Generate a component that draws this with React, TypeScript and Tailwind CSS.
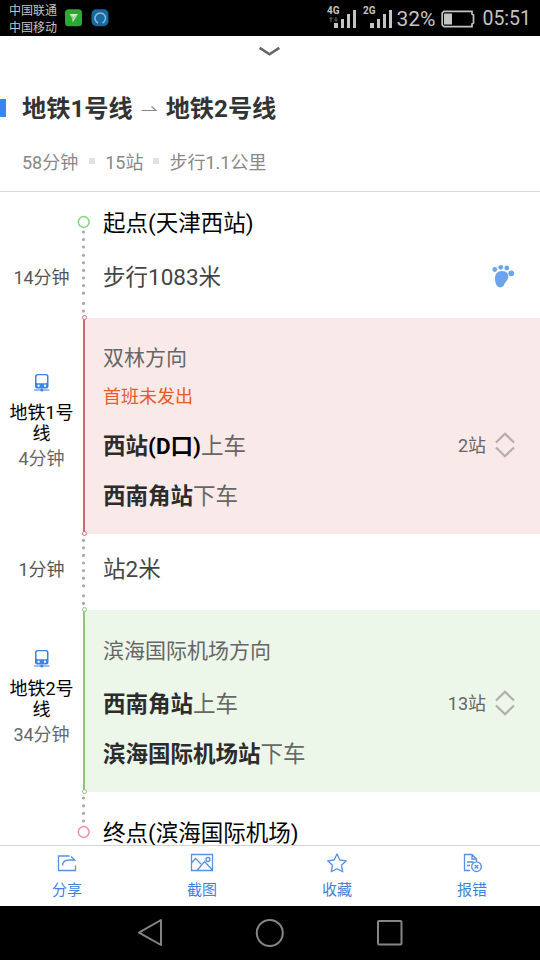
import type { ReactNode } from "react";

const DOTS_START = [232, 239.5, 247, 255.3, 262.8, 270.4, 278, 285.6, 293.2, 303.4, 311].map((y) => y - 192);
const DOTS_TRANSFER = [540.3, 547.8, 555.4, 563, 570.6, 578.2, 585.8, 595.8, 603.4].map((y) => y - 534);
const DOTS_END = [798, 805.8, 813.4, 821].map((y) => y - 792);

function DottedRail({ dots, end, endColor = "" }: { dots: number[]; end?: number; endColor?: string }) {
  return (
    <div className="relative w-[2px] shrink-0">
      <svg className="absolute -left-[7px] top-0 overflow-visible" width="16" height="50" viewBox="0 0 16 50">
        {dots.map((y) => (
          <circle key={y} cx="7.5" cy={y} r="1.6" fill="#aaaaaa" />
        ))}
        {end !== undefined && <circle cx="7.7" cy={end} r="5.4" fill="#fff" stroke={endColor} strokeWidth="1.5" />}
      </svg>
    </div>
  );
}

function LineRail({ line, dot }: { line: string; dot: string }) {
  return (
    <div className={`relative z-10 w-[2px] shrink-0 ${line}`}>
      <span className={`absolute -left-[1.5px] -top-[3px] size-[5px] rounded-full border bg-white ${dot}`} />
      <span className={`absolute -bottom-[2px] -left-[1.5px] size-[5px] rounded-full border bg-white ${dot}`} />
    </div>
  );
}

function TrainIcon() {
  return (
    <svg width="16" height="18" viewBox="0 0 16 18" fill="none">
      <path fillRule="evenodd" fill="#3d82e8" d="M3.500 0h8.500q2.500 0 2.500 2.500v10q0 2-2 2h-9.500q-2 0-2-2V2.500Q1 0 3.500 0zM4 1.300Q2.500 1.300 2.500 2.800V8q0 1.300 1.300 1.300h8q1.200 0 1.200-1.300V2.800q0-1.500-1.300-1.500zM4.600 10.500a1.200 1.200 0 1 0 .01 0zM11 10.500a1.200 1.200 0 1 0 .01 0z" />
      <path d="M0 16h15.500" stroke="#5a93e8" strokeWidth="1.200" />
      <circle cx="7.800" cy="16" r="1.500" fill="#3d82e8" />
    </svg>
  );
}

function LineLabel({ name, time }: { name: string; time: string }) {
  return (
    <>
      <TrainIcon />
      <div className="mt-[10px] w-[66px] text-center text-[18px] leading-[21px] text-black">{name}</div>
      <div className="mt-[4px] text-[18px] leading-[21px] text-[#666]">{time}</div>
    </>
  );
}

function Stops({ count }: { count: string }) {
  return (
    <div className="flex items-center gap-[9px] pr-[25px]">
      <span className="text-[18px] text-[#666]">{count}</span>
      <svg className="mb-[3px]" width="20" height="26" viewBox="0 0 20 26" fill="none" stroke="#b3adad" strokeWidth="2.200">
        <path d="M1 10.500l9-8.700 9 8.700M1 15.500l9 8.700 9-8.700" />
      </svg>
    </div>
  );
}

function Action({ label, children }: { label: string; children: ReactNode }) {
  return (
    <div className="flex w-[135px] flex-col items-center pr-[1px] pt-[6px] text-[15px] leading-[20px] text-[#3d82e0]">
      <svg width="24" height="22" viewBox="0 0 24 22" fill="none" stroke="#5791e3" strokeWidth="1.300">
        {children}
      </svg>
      <span className="mt-[6px]">{label}</span>
    </div>
  );
}

function Signal({ kind, arrows }: { kind: string; arrows?: boolean }) {
  return (
    <svg className="mb-[4px]" width="30" height="28" viewBox="0 -4 30 28" fill="#c4c4c4">
      <text x="0" y="7" fontSize="10" fontWeight="700">{kind}</text>
      {arrows && <path fill="#555" d="M2 12l2-2.500L6 12H4.600v3H3.400v-3zM7 12.500h1.400V10h1.200v2.500H11L9 15z" />}
      <path d="M7 16h4v5H7zM14 12h3v9h-3zM20 7h3v14h-3zM26 3h3v18h-3z" />
    </svg>
  );
}

export default function App() {
  return (
    <div className="flex h-[960px] w-[540px] flex-col overflow-hidden bg-white font-[Roboto,'Noto_Sans_CJK_SC',sans-serif]">
      <div className="flex h-[36px] shrink-0 items-center bg-black text-[#c4c4c4]">
        <div className="ml-[9px] mt-[3px] text-[12px] leading-[17px]">
          <div>中国联通</div>
          <div>中国移动</div>
        </div>
        <svg className="ml-[8px]" width="18" height="18" viewBox="0 0 18 18">
          <rect x="0" y=".2" width="17" height="17" rx="3.500" fill="#2ca834" />
          <path d="M4.500 5h8.500L7.500 13.500V9.500z" fill="#d2e8cf" />
          <path d="M4.500 5l4 3 4.500-3-5 5z" fill="#8fca8b" />
        </svg>
        <svg className="ml-[8px]" width="18" height="18" viewBox="0 0 18 18">
          <rect x=".5" y=".2" width="17" height="17" rx="5" fill="#17699f" />
          <path d="M7 14a5.300 5.300 0 1 1 4.500 0" fill="none" stroke="#8bbbd8" strokeWidth="1.500" />
        </svg>
        <div className="ml-auto flex items-center gap-[6px] pr-[9px] pt-[2px]">
          <Signal kind="4G" arrows />
          <Signal kind="2G" />
          <span className="-ml-[3px] w-[40px] text-[21px] leading-none">32%</span>
          <svg className="mb-[1px] -ml-[1px] mr-[1px]" width="34" height="18" viewBox="0 0 34 18">
            <path d="M3 1.300h28v2.700l1.500 1v8l-1.500 1v2.700H3l-1.800-1.700V3z" fill="none" stroke="#c4c4c4" strokeWidth="1.700" />
            <rect x="3" y="3.500" width="8" height="11" fill="#c4c4c4" />
          </svg>
          <span className="text-[19.5px] leading-none">05:51</span>
        </div>
      </div>

      <header className="h-[156px] shrink-0 border-b border-[#d8d8d8]">
        <svg className="mx-auto mt-[9px]" width="22" height="12" viewBox="0 0 22 12" fill="none" stroke="#666" strokeWidth="2.600">
          <path d="M.7 2.800L10.500 9.300 20.300 2.800" />
        </svg>
        <div className="mt-[34px] flex h-[36px] items-center text-[24.2px] font-bold text-[#333]">
          <span className="mb-[3px] h-[18px] w-[6px] bg-[#3a85f5]" />
          <span className="ml-[16px]">地铁1号线</span>
          <svg className="ml-[8px] mr-[9px]" width="16" height="10" viewBox="0 0 16 10" fill="none" stroke="#888" strokeWidth="1.200">
            <path d="M.5 6.500H15L10.500 2.500" />
          </svg>
          <span>地铁2号线</span>
        </div>
        <div className="ml-[22px] mt-[22px] flex h-[26px] items-center text-[18px] text-[#888]">
          <span>58分钟</span>
          <span className="ml-[11px] mr-[10px] mb-[3px] size-[6px] bg-[#e1e1e1]" />
          <span>15站</span>
          <span className="mx-[10px] mb-[3px] size-[6px] bg-[#e1e1e1]" />
          <span>步行1.1公里</span>
        </div>
      </header>

      <main className="min-h-0 flex-1">
        <section className="flex h-[126px]">
          <div className="w-[83px] pt-[75px] text-center text-[18px] leading-[21px] text-[#555]">14分钟</div>
          <DottedRail dots={DOTS_START} end={30} endColor="#7dd67d" />
          <div className="flex-1 pl-[18px] pt-[15px] text-[22.5px] leading-[32px]">
            <div className="text-black">起点(天津西站)</div>
            <div className="mt-[22px] flex items-center justify-between pr-[25px] text-[#444]">
              <span>步行1083米</span>
              <svg className="mb-[3px]" width="23" height="24" viewBox="0 0 23 24" fill="#6ba3ec">
                <circle cx="2.800" cy="5.500" r="2.400" />
                <circle cx="8.800" cy="3.300" r="2.400" />
                <circle cx="14.800" cy="4" r="2.400" />
                <circle cx="19.300" cy="9.300" r="2.900" />
                <path d="M9.500 7c5.300 0 7.200 2.800 6.800 6.200-.4 3.200-2.900 4.300-4 7.100-.7 1.800-1.900 3.100-3.900 3.100-3.600 0-5.400-4.400-5.400-9C3 9.800 5.500 7 9.500 7z" />
              </svg>
            </div>
          </div>
        </section>

        <section className="flex h-[216px]">
          <div className="flex w-[83px] flex-col items-center pt-[56px]">
            <LineLabel name="地铁1号线" time="4分钟" />
          </div>
          <LineRail line="bg-[#c96b75]" dot="border-[#d0707a]" />
          <div className="flex-1 bg-[#f9eae9] pl-[18px] pt-[24px] text-[22.5px] leading-[32px] text-[#666]">
            <div className="text-[21px]">双林方向</div>
            <div className="mt-[11px] text-[18px] leading-[24px] text-[#ea5a28]">首班未发出</div>
            <div className="mt-[21px] flex items-center justify-between">
              <div><b className="text-[#2c2c2c]">西站</b><b className="text-black">(D口)</b>上车</div>
              <Stops count="2站" />
            </div>
            <div className="mt-[18px]"><b className="text-[#2c2c2c]">西南角站</b>下车</div>
          </div>
        </section>

        <section className="flex h-[76px]">
          <div className="w-[83px] pt-[25px] text-center text-[18px] leading-[21px] text-[#555]">1分钟</div>
          <DottedRail dots={DOTS_TRANSFER} />
          <div className="flex-1 pl-[18px] pt-[19px] text-[22.5px] leading-[32px] text-[#444]">站2米</div>
        </section>

        <section className="flex h-[182px]">
          <div className="flex w-[83px] flex-col items-center pt-[40px]">
            <LineLabel name="地铁2号线" time="34分钟" />
          </div>
          <LineRail line="bg-[#8fc47c]" dot="border-[#8fc47c]" />
          <div className="flex-1 bg-[#ecf7ea] pl-[18px] pt-[25px] text-[22.5px] leading-[32px] text-[#666]">
            <div className="text-[21px]">滨海国际机场方向</div>
            <div className="mt-[21px] flex items-center justify-between">
              <div><b className="text-[#2c2c2c]">西南角站</b>上车</div>
              <Stops count="13站" />
            </div>
            <div className="mt-[18px]"><b className="text-[#2c2c2c]">滨海国际机场站</b>下车</div>
          </div>
        </section>

        <section className="flex h-[53px]">
          <div className="w-[83px]" />
          <DottedRail dots={DOTS_END} end={40} endColor="#ee8fa0" />
          <div className="flex-1 pl-[18px] pt-[29px] text-[22.5px] leading-[24px] text-black">终点(滨海国际机场)</div>
        </section>
      </main>

      <footer className="flex h-[61px] shrink-0 border-t border-[#d4d4d4] bg-white">
        <Action label="分享">
          <path d="M14.500 4H3.500v14.500h17v-5M7.500 13.500q.3-5.500 6.500-5.500h5.800L16 4.500" />
        </Action>
        <Action label="截图">
          <path d="M1.500 2.500h21v16h-21zM1.500 11l4-4.500L11 12M7 18.500l7.500-9 8 8.500" />
          <circle cx="18" cy="7.500" r="2" />
        </Action>
        <Action label="收藏">
          <path strokeLinejoin="round" d="M12 2l2.800 6 6.500.8-4.800 4.500 1.200 6.500-5.700-3.100-5.700 3.100 1.200-6.500L2.700 8.800 9.200 8z" />
        </Action>
        <Action label="报错">
          <path d="M10 18.500H4.500v-16h7.500l4.500 4.500v2.500M12 2.500V7h4.500M7 10h6.500M7 13.500h3" />
          <circle cx="16.500" cy="14.700" r="4.800" />
          <path d="M14.700 12.900l3.600 3.600M18.300 12.900l-3.600 3.600" />
        </Action>
      </footer>

      <nav className="flex h-[54px] shrink-0 items-center justify-center bg-black">
        <svg width="270" height="54" viewBox="0 0 270 54" fill="none" stroke="#858585" strokeWidth="2" strokeLinejoin="round">
          <path d="M26 14v25L4 26.700z" />
          <circle cx="134.800" cy="27" r="13" />
          <rect x="243" y="15" width="23.500" height="23.500" rx="1" />
        </svg>
      </nav>
    </div>
  );
}
